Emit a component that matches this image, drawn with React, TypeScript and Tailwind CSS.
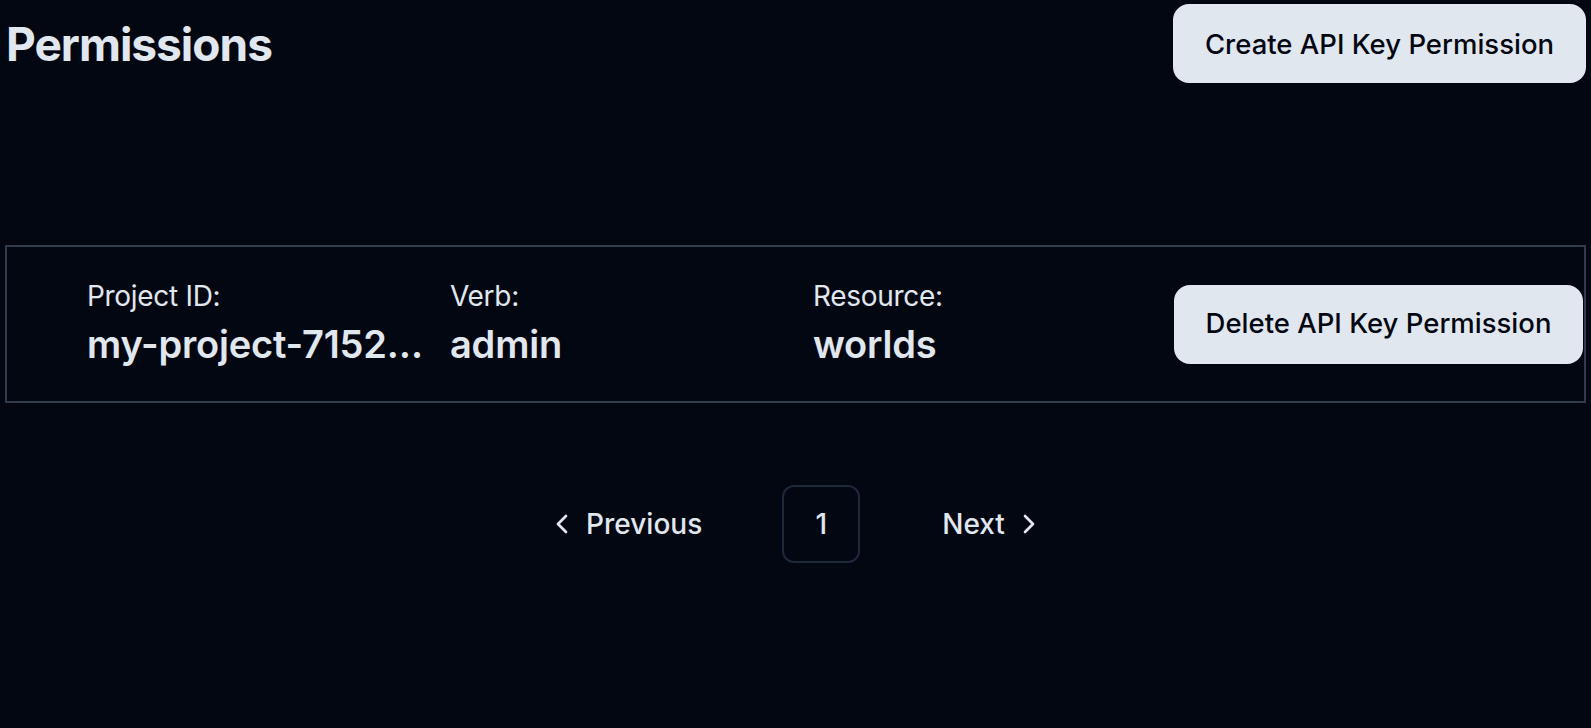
import React from 'react';
import { ChevronLeft, ChevronRight } from 'lucide-react';

type IPermission = {
  projectId: string;
  verb: string;
  resource: string;
};

const permissions: IPermission[] = [
  { projectId: 'my-project-7152a9f3c0b8e41d', verb: 'admin', resource: 'worlds' },
];

function Field({ label, value }: { label: string; value: string }) {
  return (
    <div className="w-[363px] shrink-0 pr-[22px]">
      <p className="text-[28px] leading-[40px] font-normal tracking-[-0.3px] text-[#e1e7ef]">{label}</p>
      <p className="truncate text-[38px] leading-[56px] font-semibold tracking-[-0.2px] text-[#e1e7ef]">{value}</p>
    </div>
  );
}

export default function App() {
  return (
    <div
      className="min-h-[728px] bg-[#030711] px-[5px] pt-[4px] text-[#e1e7ef]"
      style={{ fontFamily: 'Inter, "Noto Sans", sans-serif' }}
    >
      <div className="flex items-center justify-between">
        <h1 className="pl-[1px] text-[46px] leading-[64px] font-bold tracking-[-1px]">Permissions</h1>
        <button className="h-[79px] w-[413px] rounded-[16px] bg-[#e1e7ef] pt-[2px] text-[27.5px] font-[450] text-[#030711]">
          Create API Key Permission
        </button>
      </div>

      <div className="mt-[162px]">
        {permissions.map((p) => (
          <div
            key={p.projectId}
            className="flex items-center border-2 border-[#313c4f] py-[29px] pl-[80px]"
          >
            <Field label="Project ID:" value={p.projectId} />
            <Field label="Verb:" value={p.verb} />
            <Field label="Resource:" value={p.resource} />
            <button className="-ml-[2px] h-[79px] w-[409px] shrink-0 rounded-[16px] bg-[#e1e7ef] text-[27.5px] font-[450] text-[#030711]">
              Delete API Key Permission
            </button>
          </div>
        ))}
      </div>

      <div className="mt-[82px] flex items-center justify-center">
        <button className="flex h-[78px] items-center gap-[8px] pr-[80px] text-[28px] font-medium">
          <ChevronLeft className="h-[32px] w-[32px]" />
          <span>Previous</span>
        </button>
        <button className="flex h-[78px] w-[78px] items-center justify-center rounded-[12px] border-2 border-[#1d283a] text-[28px] font-medium">
          1
        </button>
        <button className="flex h-[78px] items-center gap-[8px] pl-[82px] text-[28px] font-medium">
          <span>Next</span>
          <ChevronRight className="h-[32px] w-[32px]" />
        </button>
      </div>
    </div>
  );
}
